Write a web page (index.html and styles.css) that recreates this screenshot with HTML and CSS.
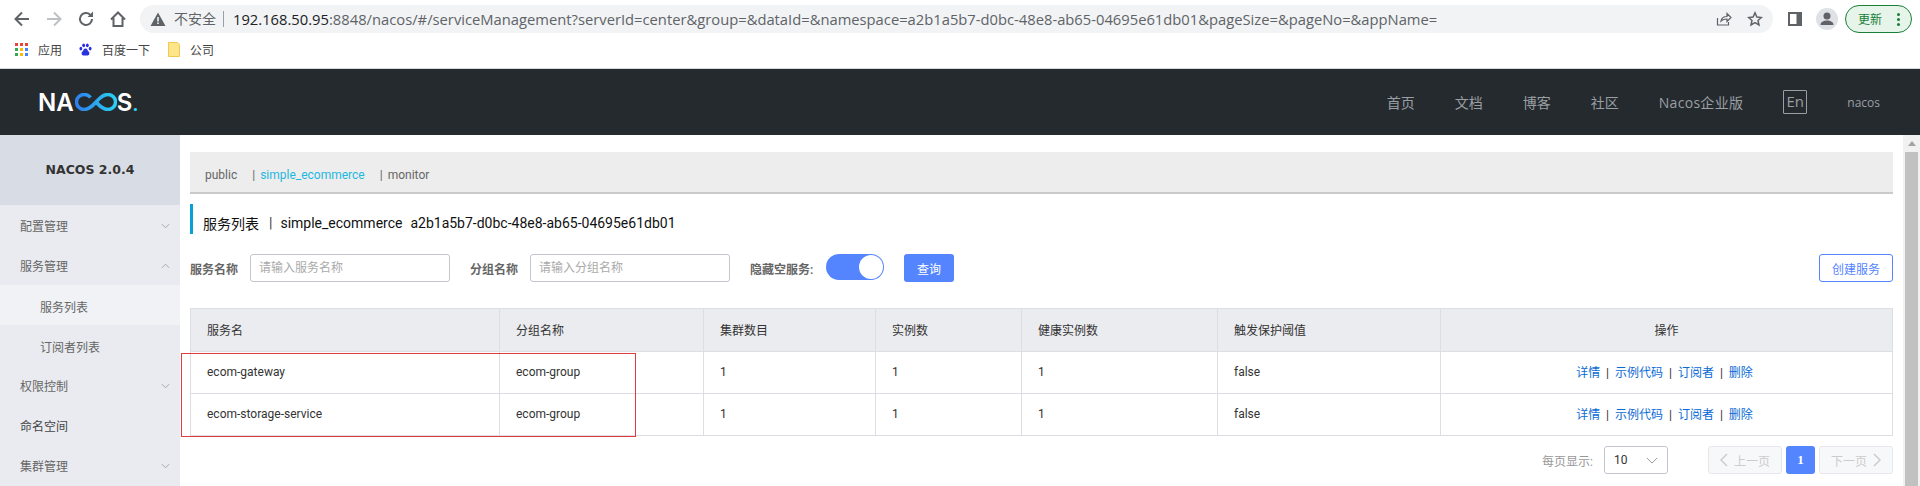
FILE: index.html
```html
<!DOCTYPE html>
<html lang="zh-CN">
<head>
  <meta charset="UTF-8" />
  <title>Nacos</title>
  <link rel="stylesheet" href="styles.css">
</head>
<body>
  <!-- browser toolbar -->
  <div class="toolbar">
    <svg class="tool" viewBox="0 0 20 20"><path d="M17 10H4M10 3.5L3.5 10l6.5 6.5" fill="none" stroke="#5f6368" stroke-width="2"/></svg>
    <svg class="tool" viewBox="0 0 20 20"><path d="M3 10h13M10 3.5l6.500 6.500-6.500 6.500" fill="none" stroke="#bdc1c6" stroke-width="2"/></svg>
    <svg class="tool" viewBox="0 0 20 20"><path d="M16 10a6 6 0 1 1-1.800-4.300" fill="none" stroke="#5f6368" stroke-width="2"/><path d="M17 2.500V8h-5.500z" fill="#5f6368"/></svg>
    <svg class="tool" viewBox="0 0 20 20"><path d="M3 10.500 10 3.500l7 7M5.500 9v8h9V9" fill="none" stroke="#5f6368" stroke-width="2"/></svg>
    <div class="omnibox">
      <svg class="warn" viewBox="0 0 16 16"><path d="M8 1.500 15.500 15H.5z" fill="#5f6368"/><path d="M7.200 6h1.600v4.500H7.200zM7.200 11.500h1.600V13H7.200z" fill="#f1f3f4"/></svg>
      <span class="insecure">不安全</span>
      <span class="url"><b>192.168.50.95</b>:8848/nacos/#/serviceManagement?serverId=center&amp;group=&amp;dataId=&amp;namespace=a2b1a5b7-d0bc-48e8-ab65-04695e61db01&amp;pageSize=&amp;pageNo=&amp;appName=</span>
      <svg class="omni-icon" viewBox="0 0 16 16"><path d="M1.500 7v7h11v-3M5 10c.5-3 3-4.500 6-4.500V2.500L15 6.500l-4 4V8c-2.500 0-4.500.5-6 2z" fill="none" stroke="#5f6368" stroke-width="1.200"/></svg>
      <svg class="omni-icon" viewBox="0 0 16 16"><path d="M8 1.800l1.900 4.200 4.500.5-3.400 3 1 4.500L8 11.700 4 14l1-4.500-3.400-3 4.500-.5z" fill="none" stroke="#5f6368" stroke-width="1.500"/></svg>
    </div>
    <svg class="panel" viewBox="0 0 14 14"><path d="M0 0h14v14H0z" fill="#5f6368"/><path d="M2 2h6.500v10H2z" fill="#fff"/></svg>
    <div class="avatar"><svg viewBox="0 0 22 22"><circle cx="11" cy="8" r="3.500" fill="#5f6368"/><path d="M4.500 17c0-3 3-4.500 6.500-4.500s6.500 1.500 6.500 4.500z" fill="#5f6368"/></svg></div>
    <div class="update"><span>更新</span><i></i></div>
  </div>

  <div class="bookmarks">
    <div class="bookmark">
      <svg class="mark" viewBox="0 0 13 13"><path d="M0 0h3v3H0z" fill="#ea4335"/><path d="M5 0h3v3H5z" fill="#ea4335"/><path d="M10 0h3v3h-3z" fill="#ea4335"/><path d="M0 5h3v3H0z" fill="#34a853"/><path d="M5 5h3v3H5z" fill="#fbbc04"/><path d="M10 5h3v3h-3z" fill="#4285f4"/><path d="M0 10h3v3H0z" fill="#34a853"/><path d="M5 10h3v3H5z" fill="#fbbc04"/><path d="M10 10h3v3h-3z" fill="#4285f4"/></svg>
      <span>应用</span>
    </div>
    <div class="bookmark">
      <svg class="mark" viewBox="0 0 14 14"><ellipse cx="2" cy="6" rx="1.500" ry="2" fill="#2932e1"/><ellipse cx="5" cy="2.500" rx="1.500" ry="2" fill="#2932e1"/><ellipse cx="9" cy="2.500" rx="1.500" ry="2" fill="#2932e1"/><ellipse cx="12" cy="6" rx="1.500" ry="2" fill="#2932e1"/><path d="M7 6c-2 0-2 2-3.500 3.500S3 14 5.500 13.500c1-.2 2-.2 3 0C11 14 12 11 10.500 9.500S9 6 7 6z" fill="#2932e1"/></svg>
      <span>百度一下</span>
    </div>
    <div class="bookmark">
      <svg class="mark folder" viewBox="0 0 12 15"><path d="M.5.500h9l2 2v12H.5z" fill="#fde68a" stroke="#f2c94c"/></svg>
      <span>公司</span>
    </div>
  </div>

  <!-- nacos header -->
  <header class="header">
    <div class="logo"><span>NA</span><svg class="logo-loop" viewBox="0 0 42 18"><defs><linearGradient id="loop" x1="0" x2="1"><stop offset="0" stop-color="#2f7fec"/><stop offset="1" stop-color="#2ad0f0"/></linearGradient></defs><path d="M15.500 4.500C14 2.500 12 1.500 9 1.500a7.500 7.500 0 0 0 0 15c5 0 8-3 12-7.500s7-7.500 12-7.500a7.500 7.500 0 0 1 0 15c-5 0-8-3-12-7.500" fill="none" stroke="url(#loop)" stroke-width="3.500"/></svg><span>S</span><em>.</em></div>
    <nav class="nav">
      <a>首页</a>
      <a>文档</a>
      <a>博客</a>
      <a>社区</a>
      <a class="nav-ent">Nacos企业版</a>
      <a class="lang">En</a>
      <a class="user">nacos</a>
    </nav>
  </header>

  <div class="page">
    <aside class="sidebar">
      <div class="version">NACOS 2.0.4</div>
      <div class="menu-item">配置管理<svg class="chev" viewBox="0 0 10 6"><path d="M1 1l4 4 4-4"/></svg></div>
      <div class="menu-item">服务管理<svg class="chev" viewBox="0 0 10 6"><path d="M1 5l4-4 4 4"/></svg></div>
      <div class="menu-item sub current">服务列表</div>
      <div class="menu-item sub">订阅者列表</div>
      <div class="menu-item">权限控制<svg class="chev" viewBox="0 0 10 6"><path d="M1 1l4 4 4-4"/></svg></div>
      <div class="menu-item plain">命名空间</div>
      <div class="menu-item">集群管理<svg class="chev" viewBox="0 0 10 6"><path d="M1 1l4 4 4-4"/></svg></div>
    </aside>

    <main class="content">
      <div class="namespaces">
        <span class="ns">public</span>
        <span class="ns-sep">|</span><span class="ns active">simple_ecommerce</span>
        <span class="ns-sep">|</span><span class="ns">monitor</span>
      </div>

      <div class="title">
        <span>服务列表</span><span class="title-sep">|</span><span>simple_ecommerce</span><span class="title-id">a2b1a5b7-d0bc-48e8-ab65-04695e61db01</span>
      </div>

      <div class="filters">
        <label class="field-label">服务名称</label>
        <input class="field" placeholder="请输入服务名称" />
        <label class="field-label group-label">分组名称</label>
        <input class="field" placeholder="请输入分组名称" />
        <label class="field-label hide-label">隐藏空服务:</label>
        <div class="switch"><i></i></div>
        <button class="btn primary">查询</button>
        <button class="btn outline">创建服务</button>
      </div>

      <table class="services">
        <thead>
          <tr><th>服务名</th><th>分组名称</th><th>集群数目</th><th>实例数</th><th>健康实例数</th><th>触发保护阈值</th><th class="ops">操作</th></tr>
        </thead>
        <tbody>
          <tr>
            <td>ecom-gateway</td><td>ecom-group</td><td>1</td><td>1</td><td>1</td><td>false</td>
            <td class="ops"><a>详情</a> | <a>示例代码</a> | <a>订阅者</a> | <a>删除</a></td>
          </tr>
          <tr>
            <td>ecom-storage-service</td><td>ecom-group</td><td>1</td><td>1</td><td>1</td><td>false</td>
            <td class="ops"><a>详情</a> | <a>示例代码</a> | <a>订阅者</a> | <a>删除</a></td>
          </tr>
        </tbody>
      </table>

      <div class="pager">
        <span class="per-page">每页显示:</span>
        <div class="select">10<svg viewBox="0 0 14 8"><path d="M1 1l6 6 6-6"/></svg></div>
        <div class="page-btn disabled"><svg viewBox="0 0 8 14"><path d="M7 1L1 7l6 6"/></svg>上一页</div>
        <div class="page-btn current-page">1</div>
        <div class="page-btn disabled">下一页<svg viewBox="0 0 8 14"><path d="M1 1l6 6-6 6"/></svg></div>
      </div>

      <!-- red box drawn over the screenshot -->
      <div class="highlight"></div>
    </main>

    <div class="scrollbar">
      <svg viewBox="0 0 8 5"><path d="M4 0l4 5H0z" fill="#a3a3a3"/></svg>
      <div class="thumb"></div>
    </div>
  </div>
</body>
</html>
```

FILE: styles.css
```css
/* Reset and base */
*, *::before, *::after {
  box-sizing: border-box;
}
html, body {
  margin: 0;
  padding: 0;
  height: 100%;
  overflow: hidden;
  background: #fff;
  color: #333;
  font-family: Roboto, "Noto Sans CJK SC", sans-serif;
  font-size: 12px;
}

/* Browser toolbar */
.toolbar {
  height: 37px;
  display: flex;
  align-items: center;
  padding-left: 12px;
}
.tool {
  width: 20px;
  height: 20px;
  margin-right: 12px;
  flex: none;
}
.omnibox {
  width: 1633px;
  height: 28px;
  flex: none;
  display: flex;
  align-items: center;
  background: #f1f3f4;
  border-radius: 14px;
  padding: 0 10px;
}
.warn {
  width: 16px;
  height: 16px;
  flex: none;
}
.insecure {
  margin-left: 8px;
  font-size: 14px;
  color: #5f6368;
  padding-right: 7px;
  border-right: 1px solid #9aa0a6;
  line-height: 16px;
}
.url {
  margin-left: 9px;
  font-family: "Open Sans", "Noto Sans CJK SC", sans-serif;
  font-size: 14.75px;
  color: #5f6368;
  white-space: nowrap;
  flex: 1;
}
.url b {
  font-weight: 400;
  color: #202124;
}
.omni-icon {
  width: 16px;
  height: 16px;
  margin-left: 15px;
  flex: none;
}
.panel {
  width: 14px;
  height: 14px;
  margin-left: 15px;
  flex: none;
}
.avatar {
  width: 22px;
  height: 22px;
  margin-left: 14px;
  border-radius: 50%;
  background: #dee1e6;
  flex: none;
}
.avatar svg {
  display: block;
}
.update {
  width: 67px;
  height: 28px;
  margin-left: 7px;
  flex: none;
  border: 1px solid #188038;
  border-radius: 14px;
  background: #e6f4ea;
  color: #188038;
  font-size: 12px;
  display: flex;
  align-items: center;
  padding-left: 12px;
  position: relative;
}
.update i {
  position: absolute;
  right: 11px;
  top: 7px;
  width: 3px;
  height: 3px;
  border-radius: 50%;
  background: #188038;
  box-shadow: 0 5px 0 #188038, 0 10px 0 #188038;
}

/* Bookmarks */
.bookmarks {
  height: 32px;
  display: flex;
  align-items: center;
  padding: 0 0 6px 15px;
  border-bottom: 1px solid #d6d6d6;
  color: #444;
  font-size: 12px;
}
.bookmark {
  display: flex;
  align-items: center;
}
.bookmark .mark {
  width: 13px;
  height: 13px;
  margin-right: 10px;
}
.bookmark:nth-child(2) {
  margin-left: 17px;
}
.bookmark:nth-child(3) {
  margin-left: 18px;
}
.bookmark .folder {
  width: 12px;
  height: 15px;
}

/* Nacos header */
.header {
  height: 66px;
  background: #252a2f;
  display: flex;
  align-items: center;
}
.logo {
  margin-left: 38px;
  display: flex;
  align-items: center;
  color: #fff;
  font-family: Inter, sans-serif;
  font-size: 24px;
  font-weight: 600;
}
.logo-loop {
  width: 42px;
  height: 18px;
  margin-left: 1px;
}
.logo em {
  color: #2ad0f0;
  font-style: normal;
  font-size: 20px;
  align-self: flex-end;
  line-height: 25px;
}
.nav {
  margin-left: auto;
  display: flex;
  align-items: center;
  color: #9a9fa3;
  font-family: "Open Sans", "Noto Sans CJK SC", sans-serif;
  font-size: 14px;
  padding-right: 40px;
}
.nav a {
  margin-left: 40px;
}
.nav .nav-ent {
  letter-spacing: 0.3px;
}
.nav .lang {
  width: 24px;
  height: 24px;
  border: 1px solid #9a9fa3;
  border-radius: 1px;
  text-align: center;
  line-height: 20px;
  font-size: 15px;
}
.nav .user {
  font-size: 12px;
}

/* Sidebar and page */
.page {
  height: 351px;
  display: flex;
}
.sidebar {
  width: 180px;
  flex: none;
  background: #e9ebf0;
  color: #666;
  overflow: hidden;
}
.version {
  height: 70px;
  background: #d8dce4;
  color: #333;
  font-family: "DejaVu Sans", sans-serif;
  font-weight: 700;
  font-size: 12.5px;
  text-align: center;
  line-height: 70px;
}
.menu-item {
  height: 40px;
  line-height: 44px;
  padding-left: 20px;
  position: relative;
}
.menu-item.sub {
  padding-left: 40px;
  line-height: 46px;
}
.menu-item.plain {
  color: #444;
}
.menu-item.current {
  background: #f0f2f5;
}
.chev {
  position: absolute;
  right: 10px;
  top: 18px;
  width: 9px;
  height: 6px;
  fill: none;
  stroke: #9aa0a8;
  stroke-width: 1;
}

/* Main column */
.content {
  flex: 1;
  padding: 17px 10px 0;
  position: relative;
  min-width: 0;
}
.namespaces {
  height: 42px;
  background: #ededed;
  border-bottom: 2px solid #cacaca;
  display: flex;
  align-items: center;
  padding: 6px 0 0 15px;
  color: #666;
}
.ns-sep {
  margin: 0 5px 0 15px;
}
.ns.active {
  color: #1fb8e0;
}
.title {
  height: 30px;
  margin-top: 10px;
  border-left: 3px solid #09a0d8;
  display: flex;
  align-items: center;
  padding: 8px 0 0 10px;
  color: #111;
  font-size: 14px;
}
.title-sep {
  margin: 0 8px 0 10px;
  color: #333;
}
.title-id {
  margin-left: 8px;
}
.filters {
  display: flex;
  align-items: center;
  height: 28px;
  margin-top: 20px;
}
.field-label {
  font-weight: 600;
  color: #666;
  width: 60px;
  flex: none;
}
.group-label {
  margin-left: 20px;
}
.hide-label {
  margin-left: 20px;
  width: 76px;
}
.field {
  width: 200px;
  height: 28px;
  border: 1px solid #c4c6cf;
  border-radius: 3px;
  padding: 0 8px;
  font: inherit;
  outline: none;
}
.field::placeholder {
  color: #aaa;
}
.switch {
  width: 58px;
  height: 26px;
  margin-top: -2px;
  border-radius: 13px;
  background: #5584ff;
  position: relative;
}
.switch i {
  position: absolute;
  top: 1px;
  right: 1px;
  width: 24px;
  height: 24px;
  border-radius: 50%;
  background: #fff;
}
.btn {
  height: 28px;
  border-radius: 3px;
  font: inherit;
  padding: 0;
}
.btn.primary {
  width: 50px;
  margin-left: 20px;
  border: 0;
  background: #5584ff;
  color: #fff;
}
.btn.outline {
  width: 74px;
  margin-left: auto;
  border: 1px solid #5584ff;
  background: #fff;
  color: #5584ff;
}

/* Table */
.services {
  width: 100%;
  margin-top: 26px;
  border-collapse: collapse;
  table-layout: fixed;
}
.services th, .services td {
  border: 1px solid #dcdee3;
  padding: 0 16px 2px;
  text-align: left;
  font-weight: 400;
  color: #333;
}
.services th {
  height: 43px;
  background: #ebecf0;
}
.services td {
  height: 42px;
}
.services th:nth-child(1) { width: 309px; }
.services th:nth-child(2) { width: 204px; }
.services th:nth-child(3) { width: 172px; }
.services th:nth-child(4) { width: 146px; }
.services th:nth-child(5) { width: 196px; }
.services th:nth-child(6) { width: 223px; }
.services .ops {
  text-align: center;
}
.services td.ops {
  word-spacing: 3px;
  padding-right: 20px;
}
.services a {
  color: #0a6ad6;
}

/* Pagination */
.pager {
  display: flex;
  align-items: center;
  justify-content: flex-end;
  height: 28px;
  margin-top: 10px;
}
.per-page {
  color: #999;
  margin-right: 11px;
}
.select {
  width: 64px;
  height: 28px;
  border: 1px solid #c4c6cf;
  border-radius: 3px;
  padding: 0 9px;
  display: flex;
  align-items: center;
  justify-content: space-between;
  margin-right: 40px;
}
.select svg {
  width: 12px;
  height: 7px;
  fill: none;
  stroke: #888;
  stroke-width: 1;
}
.page-btn {
  height: 28px;
  border-radius: 3px;
  display: flex;
  align-items: center;
  justify-content: center;
  gap: 6px;
}
.page-btn.disabled {
  width: 74px;
  background: #f7f8fa;
  border: 1px solid #e6e7eb;
  color: #ccc;
}
.page-btn svg {
  width: 8px;
  height: 14px;
  fill: none;
  stroke: #ccc;
  stroke-width: 1.5;
}
.current-page {
  width: 29px;
  margin: 0 4px;
  background: #5584ff;
  color: #fff;
  font-family: "Liberation Serif", serif;
  font-size: 13px;
  font-weight: 700;
}

/* Red box over the first two rows */
.highlight {
  position: absolute;
  left: 1px;
  top: 218px;
  width: 455px;
  height: 84px;
  border: 1px solid #e03c3c;
}

/* Scrollbar */
.scrollbar {
  width: 17px;
  flex: none;
  background: #f1f1f1;
  padding: 6px 2px 0;
}
.scrollbar svg {
  display: block;
  width: 8px;
  height: 5px;
  margin: 0 auto 6px;
}
.thumb {
  height: 340px;
  background: #c1c1c1;
}
```
